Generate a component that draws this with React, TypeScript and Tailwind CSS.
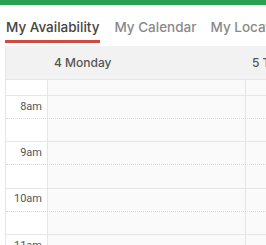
const hours = ['8am', '9am', '10am', '11am'];

const Slot = ({ label, dotted }: { label?: string; dotted?: boolean }) => (
  <div
    className={`flex h-[23.17px] border-b ${
      dotted ? 'border-dotted border-[#d9d9d9]' : 'border-[#e6e6e6]'
    }`}
  >
    <div className="flex w-[42px] shrink-0 items-center justify-end border-r border-[#e6e6e6] pr-[5px] text-[11px] text-[#555]">
      {label}
    </div>
    <div className="w-[198px] shrink-0 border-r border-[#e6e6e6] bg-[#fafafa]" />
    <div className="flex-1 bg-[#fafafa]" />
  </div>
);

export default function App() {
  return (
    <div
      className="h-[245px] w-[266px] overflow-hidden bg-white"
      style={{ fontFamily: 'Roboto, sans-serif' }}
    >
      <div className="h-[5px] bg-[#2aa053]" />
      <div
        className="flex h-[38px] items-end gap-[14px] whitespace-nowrap pl-[5px] text-[13.5px] leading-[20px] text-[#8a8a8a]"
        style={{ fontFamily: 'Inter, sans-serif' }}
      >
        <div className="border-b-[3px] border-[#cf4a3f] px-px pb-[3px] font-medium text-[#444]">
          My Availability
        </div>
        <div className="pb-[6px] font-medium">My Calendar</div>
        <div className="pb-[6px] font-medium">My Location</div>
      </div>
      <div className="ml-[5px] border-l border-[#e6e6e6]">
        <div
          className="mt-[3px] flex h-[34px] items-center overflow-hidden whitespace-nowrap border-b border-[#e6e6e6] bg-[#f2f2f2] text-[12px] font-medium text-[#555]"
          style={{ fontFamily: 'Inter, sans-serif' }}
        >
          <div className="w-[42px] shrink-0" />
          <div className="w-[198px] shrink-0 pl-[6px]">4 Monday</div>
          <div className="shrink-0 pl-[6px]">5 Tuesday</div>
        </div>
        <div className="h-[165px] overflow-hidden">
          <div className="-mt-[7.2px]">
            <Slot />
            {hours.map((h) => (
              <div key={h}>
                <Slot label={h} dotted />
                <Slot />
              </div>
            ))}
          </div>
        </div>
      </div>
    </div>
  );
}
